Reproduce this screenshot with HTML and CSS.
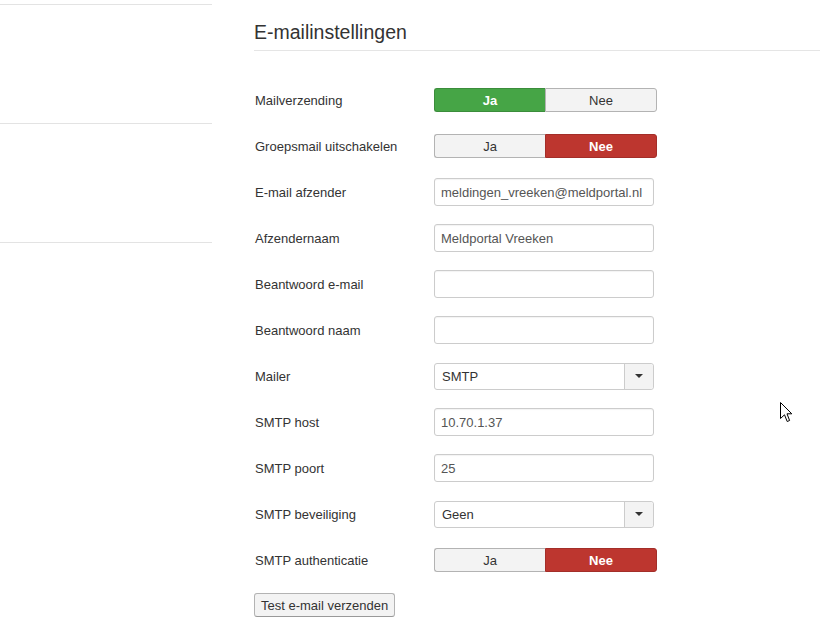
FILE: index.html
```html
<!DOCTYPE html>
<html lang="nl">
<head>
    <meta charset="UTF-8">
    <title>E-mailinstellingen</title>
    <link rel="stylesheet" href="styles.css">
</head>
<body>

    <div class="page">
        <!-- Sidebar -->
        <div class="sidebar">
            <div class="side-block"></div>
            <div class="side-block"></div>
            <div class="side-block"></div>
        </div>

        <div class="content">
            <h2 class="legend">E-mailinstellingen</h2>

            <div class="control-group">
                <label>Mailverzending</label>
                <div class="yesno">
                    <button class="active-yes">Ja</button>
                    <button>Nee</button>
                </div>
            </div>

            <div class="control-group">
                <label>Groepsmail uitschakelen</label>
                <div class="yesno">
                    <button>Ja</button>
                    <button class="active-no">Nee</button>
                </div>
            </div>

            <div class="control-group">
                <label>E-mail afzender</label>
                <input type="text" value="meldingen_vreeken@meldportal.nl">
            </div>

            <div class="control-group">
                <label>Afzendernaam</label>
                <input type="text" value="Meldportal Vreeken">
            </div>

            <div class="control-group">
                <label>Beantwoord e-mail</label>
                <input type="text" value="">
            </div>

            <div class="control-group">
                <label>Beantwoord naam</label>
                <input type="text" value="">
            </div>

            <div class="control-group">
                <label>Mailer</label>
                <div class="chzn-select">
                    <span>SMTP</span>
                    <div class="chzn-arrow"><b></b></div>
                </div>
            </div>

            <div class="control-group">
                <label>SMTP host</label>
                <input type="text" value="10.70.1.37">
            </div>

            <div class="control-group">
                <label>SMTP poort</label>
                <input type="text" value="25">
            </div>

            <div class="control-group">
                <label>SMTP beveiliging</label>
                <div class="chzn-select">
                    <span>Geen</span>
                    <div class="chzn-arrow"><b></b></div>
                </div>
            </div>

            <div class="control-group">
                <label>SMTP authenticatie</label>
                <div class="yesno">
                    <button>Ja</button>
                    <button class="active-no">Nee</button>
                </div>
            </div>

            <button class="btn">Test e-mail verzenden</button>
        </div>
    </div>

    <!-- mouse pointer -->
    <svg class="cursor" width="14" height="22" viewBox="0 0 14 22">
        <polygon points="0.5,0.5 0.5,16.5 4.5,12.8 7.2,19.5 9.6,18.5 7,11.8 11.8,11.8" fill="#fff" stroke="#000" stroke-width="1"/>
    </svg>

</body>
</html>
```

FILE: styles.css
```css
body {
    margin: 0;
    font-family: "Liberation Sans", Arial, sans-serif;
    font-size: 13px;
    color: #333;
    background-color: #fff;
}

.page {
    display: flex;
    gap: 42px;
}

.sidebar {
    width: 212px;
    padding-top: 4px;
    flex-shrink: 0;
}

.side-block {
    height: 118px;
    border-top: 1px solid #e3e3e3;
}

.content {
    flex: 1;
}

.legend {
    margin: 15px 0 35px 0;
    font-size: 19.5px;
    font-weight: normal;
    line-height: 35px;
    color: #333;
    border-bottom: 1px solid #e5e5e5;
}

.control-group {
    display: flex;
    align-items: center;
    height: 28px;
    margin-bottom: 18px;
}

.control-group label {
    width: 179px;
    flex-shrink: 0;
    padding-left: 1px;
}

.control-group input {
    width: 220px;
    height: 28px;
    box-sizing: border-box;
    padding: 4px 6px;
    border: 1px solid #ccc;
    border-radius: 3px;
    font-family: inherit;
    font-size: 13px;
    color: #555;
    box-shadow: inset 0 1px 1px rgba(0, 0, 0, 0.05);
}

.yesno {
    display: flex;
    width: 223px;
    height: 24px;
}

.yesno button {
    flex: 1;
    height: 24px;
    font-family: inherit;
    font-size: 13px;
    color: #333;
    background-color: #f3f3f3;
    border: 1px solid #b3b3b3;
    padding: 0;
}

.yesno button:first-child {
    border-radius: 3px 0 0 3px;
    border-right: none;
}

.yesno button:last-child {
    border-radius: 0 3px 3px 0;
}

.yesno .active-yes {
    background-color: #46a546;
    border-color: #3b8d3b;
    color: #fff;
    font-weight: bold;
}

.yesno .active-no {
    background-color: #bd362f;
    border-color: #a32e29;
    color: #fff;
    font-weight: bold;
}

.chzn-select {
    display: flex;
    align-items: center;
    width: 220px;
    height: 27px;
    box-sizing: border-box;
    border: 1px solid #ccc;
    border-radius: 3px;
    background-color: #fff;
    color: #333;
}

.chzn-select span {
    flex: 1;
    padding-left: 7px;
}

.chzn-arrow {
    width: 28px;
    height: 100%;
    border-left: 1px solid #ccc;
    background-color: #f3f3f3;
    border-radius: 0 3px 3px 0;
    display: flex;
    align-items: center;
    justify-content: center;
}

.chzn-arrow b {
    width: 0;
    height: 0;
    border-left: 4px solid transparent;
    border-right: 4px solid transparent;
    border-top: 4px solid #333;
}

.btn {
    height: 24px;
    padding: 0 6px;
    font-family: inherit;
    font-size: 13px;
    color: #333;
    background-color: #f3f3f3;
    border: 1px solid #b3b3b3;
    border-bottom-color: #999;
    border-radius: 3px;
    margin-top: 1px;
}

.cursor {
    position: absolute;
    left: 780px;
    top: 402px;
}
```
